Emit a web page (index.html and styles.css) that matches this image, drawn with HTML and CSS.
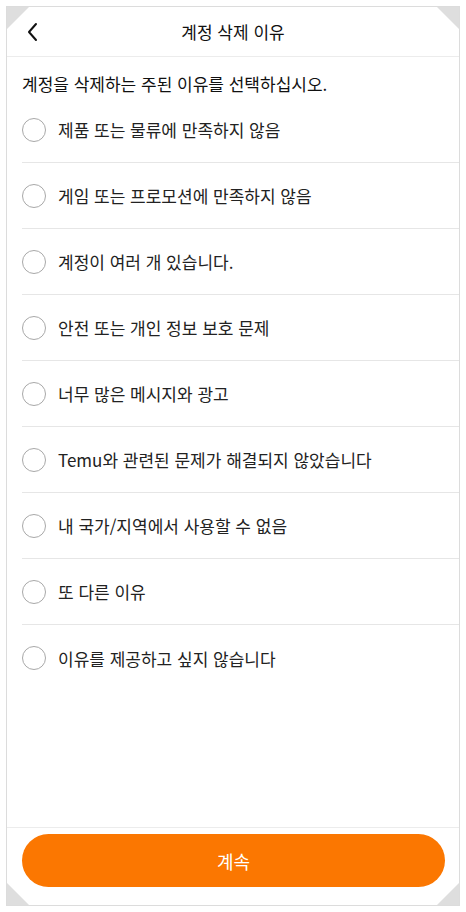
FILE: index.html
```html
<!DOCTYPE html>
<html lang="ko">
<head>
    <meta charset="UTF-8">
    <meta name="viewport" content="width=device-width, initial-scale=1.0">
    <title>계정 삭제 이유</title>
    <link rel="stylesheet" href="styles.css">
</head>
<body>
    <div class="device">
        <span class="corner tl"></span>
        <span class="corner tr"></span>
        <span class="corner bl"></span>
        <span class="corner br"></span>

        <header class="top-bar">
            <button class="back-btn" aria-label="뒤로">
                <svg width="14" height="20" viewBox="0 0 14 20">
                    <path d="M10 2 L3 10 L10 18" fill="none" stroke="#111" stroke-width="2" stroke-linecap="round" stroke-linejoin="round"/>
                </svg>
            </button>
            <h1>계정 삭제 이유</h1>
        </header>

        <div class="content">
            <p class="intro">계정을 삭제하는 주된 이유를 선택하십시오.</p>
            <ul class="reason-list">
                <li class="reason"><span class="radio"></span>제품 또는 물류에 만족하지 않음</li>
                <li class="reason"><span class="radio"></span>게임 또는 프로모션에 만족하지 않음</li>
                <li class="reason"><span class="radio"></span>계정이 여러 개 있습니다.</li>
                <li class="reason"><span class="radio"></span>안전 또는 개인 정보 보호 문제</li>
                <li class="reason"><span class="radio"></span>너무 많은 메시지와 광고</li>
                <li class="reason"><span class="radio"></span>Temu와 관련된 문제가 해결되지 않았습니다</li>
                <li class="reason"><span class="radio"></span>내 국가/지역에서 사용할 수 없음</li>
                <li class="reason"><span class="radio"></span>또 다른 이유</li>
                <li class="reason"><span class="radio"></span>이유를 제공하고 싶지 않습니다</li>
            </ul>
        </div>

        <footer class="bottom-bar">
            <button class="continue-btn">계속</button>
        </footer>
    </div>
</body>
</html>
```

FILE: styles.css
```css
* {
    box-sizing: border-box;
}
body {
    margin: 0;
    background: #fff;
    font-family: 'Noto Sans CJK KR', 'Noto Sans', sans-serif;
    color: #222;
}
.device {
    position: relative;
    margin: 6px;
    width: 454px;
    height: 900px;
    border: 1px solid #dcdcdc;
    display: flex;
    flex-direction: column;
    overflow: hidden;
}
.corner {
    position: absolute;
    width: 22px;
    height: 22px;
    background: #dedede;
}
.corner.tl {
    top: 0;
    left: 0;
    clip-path: polygon(0 0, 100% 0, 0 100%);
}
.corner.tr {
    top: 0;
    right: 0;
    clip-path: polygon(0 0, 100% 0, 100% 100%);
}
.corner.bl {
    bottom: 0;
    left: 0;
    clip-path: polygon(0 0, 100% 100%, 0 100%);
}
.corner.br {
    bottom: 0;
    right: 0;
    clip-path: polygon(100% 0, 100% 100%, 0 100%);
}
.top-bar {
    position: relative;
    height: 50px;
    border-bottom: 1px solid #ececec;
    display: flex;
    align-items: center;
    justify-content: center;
}
.top-bar h1 {
    margin: 0;
    font-size: 17px;
    font-weight: 400;
    color: #111;
}
.back-btn {
    position: absolute;
    left: 19px;
    top: 15px;
    padding: 0;
    border: none;
    background: none;
    display: flex;
}
.content {
    flex: 1;
}
.intro {
    margin: 0;
    padding: 16px 15px 2px;
    font-size: 17px;
    line-height: 22px;
    color: #111;
}
.reason-list {
    list-style: none;
    margin: 0;
    padding: 0 0 0 15px;
}
.reason {
    height: 66px;
    display: flex;
    align-items: center;
    gap: 12px;
    font-size: 17px;
    color: #222;
    border-bottom: 1px solid #e6e6e6;
}
.reason:last-child {
    border-bottom: none;
}
.radio {
    width: 24px;
    height: 24px;
    border-radius: 50%;
    border: 1.5px solid #a8a8a8;
    flex-shrink: 0;
}
.bottom-bar {
    border-top: 1px solid #ececec;
    padding: 6px 14px 18px 15px;
}
.continue-btn {
    display: block;
    width: 100%;
    height: 53px;
    border: none;
    border-radius: 27px;
    background: #fb7701;
    color: #fff;
    font-family: inherit;
    font-size: 18px;
    font-weight: 400;
}
```
